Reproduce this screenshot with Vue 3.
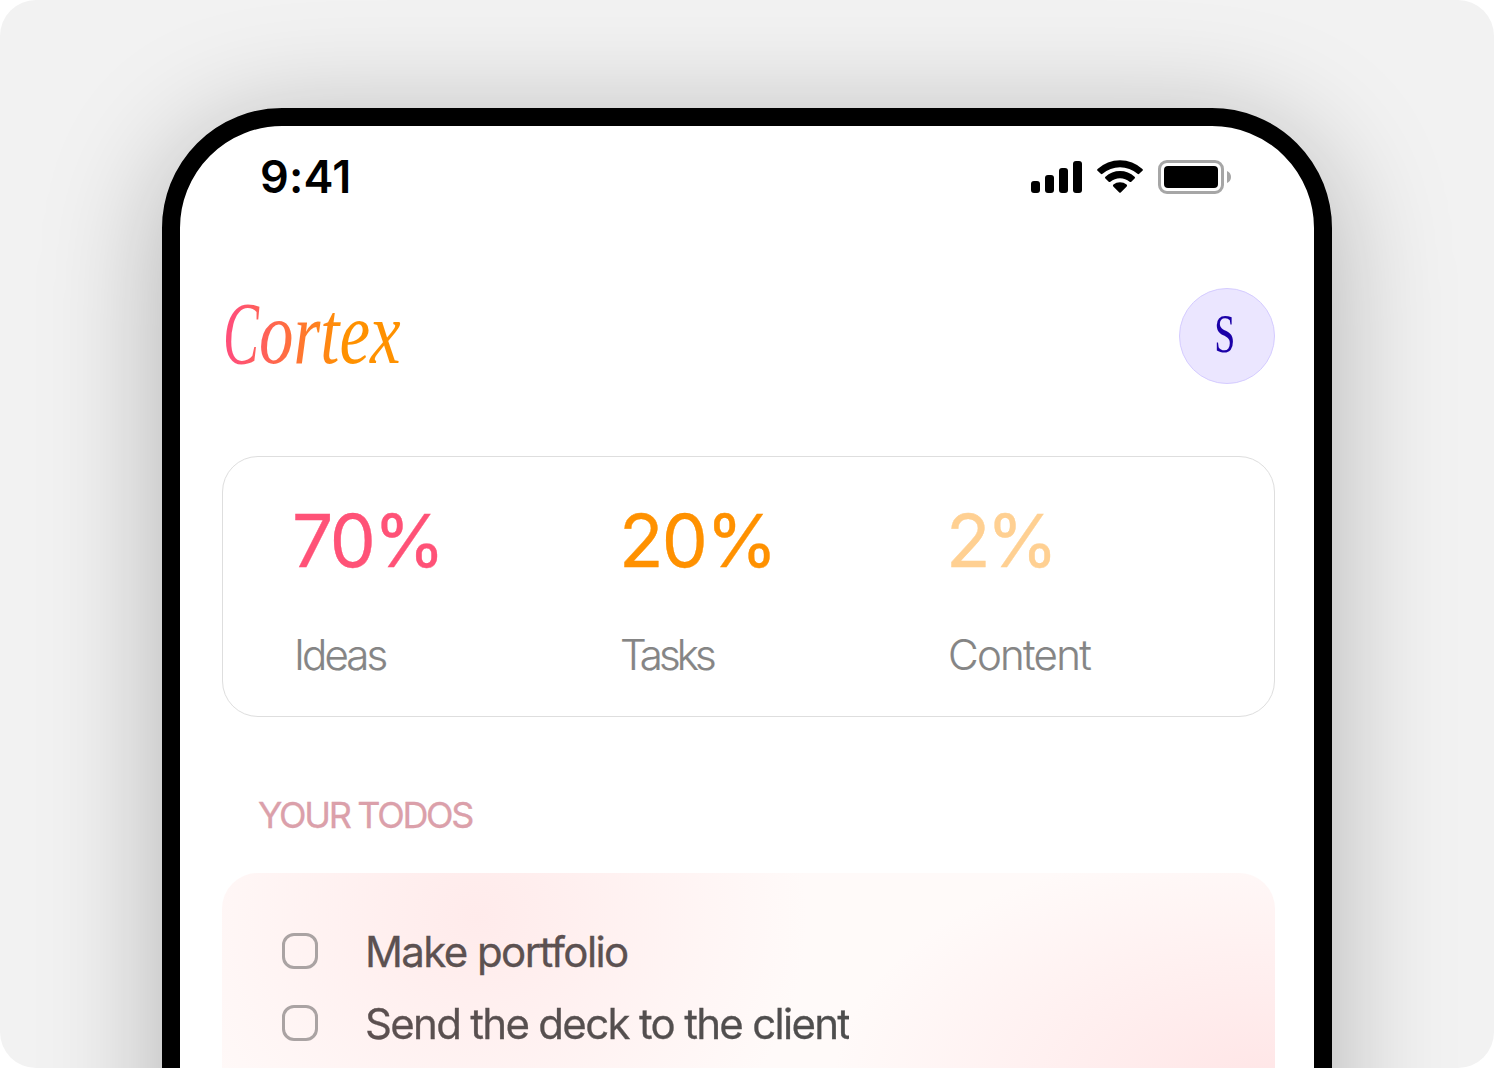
<template>
  <main class="stage">
    <section class="phone">
      <header class="status-bar">
        <span class="status-time">9:41</span>
        <svg class="status-icons" viewBox="0 0 200 34" aria-hidden="true">
          <rect x="0" y="21" width="9" height="12" rx="3" />
          <rect x="14" y="15" width="9" height="18" rx="3" />
          <rect x="28" y="8" width="9" height="25" rx="3" />
          <rect x="42" y="1" width="9" height="32" rx="3" />
          <path d="M66.6 8.9A33 33 0 0 1 111.4 8.9Q112.4 9.9 111.4 10.8L108.2 13.8Q107.4 14.5 106.5 13.7A27 27 0 0 0 71.5 13.7Q70.6 14.5 69.8 13.8L66.6 10.8Q65.6 9.9 66.6 8.9Z" />
          <path d="M74.4 16.7A21.5 21.5 0 0 1 103.6 16.7Q104.6 17.6 103.6 18.6L100.3 21.7Q99.5 22.4 98.6 21.7A14.8 14.8 0 0 0 79.4 21.7Q78.5 22.4 77.7 21.7L74.4 18.6Q73.4 17.6 74.4 16.7Z" />
          <path d="M82.4 24.6A10.5 10.5 0 0 1 95.6 24.6Q96.6 25.5 95.7 26.4L89.7 32.4Q89 33.1 88.3 32.4L82.3 26.4Q81.4 25.5 82.4 24.6Z" />
          <rect class="battery-outline" x="128.5" y="1.5" width="63" height="31" rx="7.5" />
          <rect x="133" y="6" width="54" height="22" rx="4" />
          <path class="battery-cap" d="M196 11C198.5 12 200 14.3 200 17C200 19.7 198.5 22 196 23Z" />
        </svg>
      </header>

      <div class="brand-row">
        <h1 class="brand"><span class="brand-initial">C</span><span class="brand-rest">ortex</span></h1>
        <div class="avatar"><span class="avatar-letter">S</span></div>
      </div>

      <section class="stats-card">
        <div v-for="stat in stats" :key="stat.label" class="stat" :class="stat.tone">
          <strong class="stat-value">{{ stat.value }}</strong>
          <span class="stat-label">{{ stat.label }}</span>
        </div>
      </section>

      <h2 class="section-title">YOUR TODOS</h2>

      <ul class="todo-card">
        <li v-for="todo in todos" :key="todo.id" class="todo-row" @click="todo.done = !todo.done">
          <span class="checkbox" :class="{ checked: todo.done }"></span>
          <span class="todo-text" :class="todo.id">{{ todo.text }}</span>
        </li>
      </ul>
    </section>
  </main>
</template>

<script setup>
import { ref } from 'vue'

const stats = [
  { label: 'Ideas', value: '70%', tone: 'ideas' },
  { label: 'Tasks', value: '20%', tone: 'tasks' },
  { label: 'Content', value: '2%', tone: 'content' },
]

const todos = ref([
  { id: 'portfolio', text: 'Make portfolio', done: false },
  { id: 'deck', text: 'Send the deck to the client', done: false },
])
</script>

<style>
body {
  background: #ffffff;
}
</style>

<style scoped>
.stage {
  box-sizing: border-box;
  width: 1494px;
  height: 1068px;
  padding: 108px 162px 0;
  overflow: hidden;
  border-radius: 36px;
  background: #f2f2f2;
  font-family: Inter, "Liberation Sans", sans-serif;
}

.phone {
  box-sizing: border-box;
  height: 1300px;
  padding: 0 39px 0 42px;
  border: 18px solid #000000;
  border-radius: 120px;
  background: #ffffff;
  box-shadow: 0 18px 120px rgba(0, 0, 0, 0.27);
}

.status-bar {
  display: flex;
  align-items: flex-start;
  justify-content: space-between;
  height: 162px;
  padding: 0 44px 0 38px;
  box-sizing: border-box;
}

.status-time {
  margin-top: 24px;
  font-size: 45px;
  font-weight: 600;
  line-height: 54px;
  letter-spacing: 0.2px;
}

.status-icons {
  width: 200px;
  height: 34px;
  margin-top: 34px;
}

.battery-outline {
  fill: none;
  stroke: #a6a6a6;
  stroke-width: 3;
}

.battery-cap {
  fill: #a6a6a6;
}

.brand-row {
  display: flex;
  align-items: center;
  justify-content: space-between;
  height: 96px;
}

.brand {
  display: flex;
  margin: -6px 0 0;
  padding-left: 1px;
  font-family: "Liberation Serif", serif;
  font-size: 89px;
  font-style: italic;
  font-weight: 400;
  line-height: 96px;
  color: transparent;
}

.brand-initial,
.brand-rest {
  padding-right: 12px;
  background-clip: text;
  transform-origin: left center;
}

.brand-initial {
  margin-right: -35px;
  background-image: linear-gradient(90deg, #ff4f78 24%, #ff6256 90%);
  transform: scaleX(0.605);
}

.brand-rest {
  background-image: linear-gradient(90deg, #ff5d5f 0%, #ff9100 56%);
  transform: scaleX(0.775);
}

.avatar {
  box-sizing: border-box;
  display: grid;
  place-items: center;
  width: 96px;
  height: 96px;
  border: 1.5px solid #d5ccff;
  border-radius: 50%;
  background: #ebe6ff;
}

.avatar-letter {
  padding: 0 5px 5px 0;
  font-family: "Liberation Serif", serif;
  font-size: 54px;
  line-height: 60px;
  color: #1b00a8;
  transform: scaleX(0.7);
}

.stats-card {
  box-sizing: border-box;
  display: grid;
  grid-template-columns: repeat(3, 327px);
  height: 261px;
  margin-top: 72px;
  padding: 40px 0 0 71px;
  border: 1.5px solid #dedede;
  border-radius: 36px;
}

.stat {
  display: flex;
  flex-direction: column;
  gap: 45px;
}

.stat-value {
  margin-left: -2px;
  font-size: 73px;
  font-weight: 400;
  line-height: 88px;
  letter-spacing: -2.4px;
  -webkit-text-stroke: 0.4px currentColor;
}

.ideas .stat-value {
  color: #ff5277;
}

.tasks .stat-value {
  letter-spacing: -1.8px;
  color: #ff9100;
}

.content .stat-value {
  letter-spacing: -4px;
  color: #ffd092;
}

.stat-label {
  font-size: 42px;
  font-weight: 300;
  line-height: 50px;
  letter-spacing: -1.7px;
  color: #858585;
  -webkit-text-stroke: 0.2px currentColor;
}

.ideas .stat-label {
  letter-spacing: -2.9px;
}

.tasks .stat-label {
  margin-left: -1px;
  letter-spacing: -3.9px;
}

.section-title {
  margin: 76px 0 0 36px;
  font-size: 36px;
  font-weight: 400;
  line-height: 44px;
  letter-spacing: -2.3px;
  color: #dba0aa;
  -webkit-text-stroke: 0.3px currentColor;
}

.todo-card {
  box-sizing: border-box;
  height: 420px;
  margin: 36px 0 0;
  padding: 42px 60px;
  list-style: none;
  border-radius: 36px;
  background:
    radial-gradient(ellipse 330px 300px at 255px 45px, #ffebeb 0%, rgba(255, 235, 235, 0) 100%),
    radial-gradient(ellipse 430px 245px at 1040px 215px, #ffe5e6 0%, rgba(255, 229, 230, 0) 100%),
    #fffaf9;
}

.todo-row {
  display: flex;
  align-items: center;
  gap: 48px;
  height: 72px;
}

.checkbox {
  box-sizing: border-box;
  width: 36px;
  height: 36px;
  border: 3px solid #aaa3a3;
  border-radius: 12px;
}

.checkbox.checked {
  background: #aaa3a3;
}

.todo-text {
  margin-left: -1px;
  padding-top: 1px;
  font-size: 42px;
  font-weight: 400;
  line-height: 50px;
  letter-spacing: -1.6px;
  color: #5c5151;
  -webkit-text-stroke: 0.3px #5c5151;
}

.todo-text.deck {
  letter-spacing: -1.7px;
  color: transparent;
  background: linear-gradient(90deg, #5c5050, #4d4d4d);
  background-clip: text;
  -webkit-text-stroke: 0.3px transparent;
}
</style>
